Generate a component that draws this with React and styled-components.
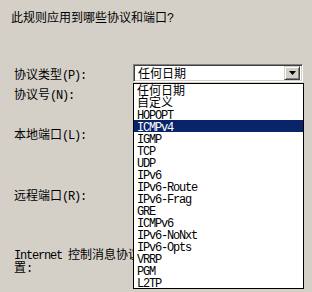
import React from 'react';
import styled, { createGlobalStyle } from 'styled-components';

const GlobalStyle = createGlobalStyle`
  html, body {
    margin: 0;
    padding: 0;
    background: #d4d0c8;
  }
  body {
    width: 312px;
    height: 292px;
    overflow: hidden;
    font-family: 'Noto Sans CJK SC', sans-serif;
    font-size: 12px;
    color: #000;
  }
`;

const Page = styled.div`
  width: 312px;
  height: 292px;
  padding: 11px 0 0 11px;
  box-sizing: border-box;
  display: flex;
  flex-direction: column;
  gap: 39px;
`;

const Title = styled.div`
  line-height: 12px;
  white-space: nowrap;
`;

// SimSun-like half-width latin: 6px per character
const Latin = styled.span`
  font-family: 'Liberation Mono', monospace;
  font-size: 12px;
  line-height: 12px;
  letter-spacing: -1.2px;
`;

const Form = styled.div`
  display: grid;
  grid-template-columns: 119px 170px;
  grid-template-rows: 24px 40px 61px 60px auto;
  align-items: start;
  padding-left: 3px;
`;

const Label = styled.div`
  grid-column: 1;
  line-height: ${p => p.$lh || 12}px;
  padding-top: ${p => p.$pad || 0}px;
  white-space: nowrap;
`;

const Combo = styled.div`
  grid-column: 2;
  grid-row: 1;
  position: relative;
  height: 18px;
  box-sizing: border-box;
  border: 1px solid;
  border-color: #808080 #ffffff #ffffff #808080;
  box-shadow: inset 1px 1px #404040, inset -1px -1px #d4d0c8;
  background: #fff;
  display: flex;
  align-items: center;
  justify-content: space-between;
  padding: 0 2px 0 4px;
`;

const ComboText = styled.span`
  line-height: 12px;
`;

const DropButton = styled.div`
  width: 16px;
  height: 14px;
  box-sizing: border-box;
  background: #d4d0c8;
  border: 1px solid;
  border-color: #d4d0c8 #404040 #404040 #d4d0c8;
  box-shadow: inset 1px 1px #ffffff, inset -1px -1px #808080;
  display: flex;
  align-items: center;
  justify-content: center;
`;

const Popup = styled.ul`
  position: absolute;
  top: 18px;
  left: -1px;
  width: 171px;
  box-sizing: border-box;
  margin: 0;
  padding: 0;
  list-style: none;
  background: #fff;
  border: 1px solid #000;
  z-index: 2;
`;

const Item = styled.li`
  height: 12px;
  line-height: 12px;
  padding-left: 3px;
  white-space: nowrap;
  background: ${p => (p.$active ? '#0a246a' : 'transparent')};
  color: ${p => (p.$active ? '#ffffff' : '#000000')};
`;

const protocols = [
  { name: '任何日期', cjk: true },
  { name: '自定义', cjk: true },
  { name: 'HOPOPT' },
  { name: 'ICMPv4', active: true },
  { name: 'IGMP' },
  { name: 'TCP' },
  { name: 'UDP' },
  { name: 'IPv6' },
  { name: 'IPv6-Route' },
  { name: 'IPv6-Frag' },
  { name: 'GRE' },
  { name: 'ICMPv6' },
  { name: 'IPv6-NoNxt' },
  { name: 'IPv6-Opts' },
  { name: 'VRRP' },
  { name: 'PGM' },
  { name: 'L2TP' },
];

function Arrow() {
  return (
    <svg width="7" height="4" viewBox="0 0 7 4">
      <path d="M0 0h7L3.5 4z" fill="#000" />
    </svg>
  );
}

export default function App() {
  return (
    <>
      <GlobalStyle />
      <Page>
        <Title>
          此规则应用到哪些协议和端口<Latin>?</Latin>
        </Title>
        <Form>
          <Label $pad={4}>
            协议类型<Latin>(P):</Latin>
          </Label>
          <Combo>
            <ComboText>任何日期</ComboText>
            <DropButton>
              <Arrow />
            </DropButton>
            <Popup>
              {protocols.map(p => (
                <Item key={p.name} $active={p.active}>
                  {p.cjk ? p.name : <Latin>{p.name}</Latin>}
                </Item>
              ))}
            </Popup>
          </Combo>
          <Label>
            协议号<Latin>(N):</Latin>
          </Label>
          <Label>
            本地端口<Latin>(L):</Latin>
          </Label>
          <Label>
            远程端口<Latin>(R):</Latin>
          </Label>
          <Label $lh={10}>
            <Latin>Internet </Latin>控制消息协议<Latin> (ICMP) </Latin>设
            <br />
            置<Latin>:</Latin>
          </Label>
        </Form>
      </Page>
    </>
  );
}
